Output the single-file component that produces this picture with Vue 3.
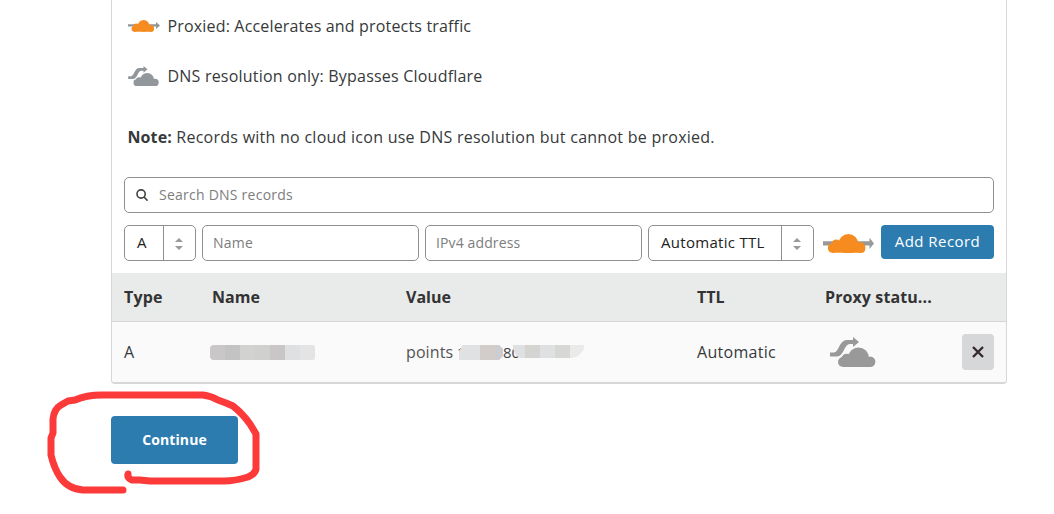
<script setup>
const maskName = ['#c9c7c8', '#c4c3c4', '#d2d2d0', '#d0d0ce', '#c9c6c7', '#dfe0e2', '#e4e4e4']
</script>

<template>
  <main class="page">
    <section class="card">
      <div class="legend">
        <svg class="legend-icon" viewBox="0 0 32 14">
          <path d="M0 5.3H28V3L32 6.4L28 10V7.5H0Z" fill="#92979b" />
          <g fill="#f68b1f"><circle cx="6.4" cy="9.8" r="2.9" /><circle cx="8.2" cy="7.3" r="2.7" /><circle cx="15.6" cy="6.8" r="5.9" /><circle cx="22.7" cy="9.4" r="3.3" /><path d="M6 7H23L25.8 10Q25.7 12.7 24 12.7H6Z" /></g>
        </svg>
        <span class="t1">Proxied: Accelerates and protects traffic</span>
      </div>
      <div class="legend second">
        <svg class="legend-icon grey" viewBox="0 0 46 30">
          <path d="M0 15.5H4C9 15.5 9 3 17 3H23V0L29 5L23 10V7H20C14 7 14 19.5 7 19.5H0Z" fill="#92979b" />
          <g fill="#92979b"><circle cx="13" cy="25" r="5" /><circle cx="16.5" cy="21.5" r="4.8" /><circle cx="28.5" cy="20.8" r="10.4" /><circle cx="40.4" cy="24.6" r="5.4" /><path d="M13 21H40V30H13Z" /></g>
        </svg>
        <span class="t2">DNS resolution only: Bypasses Cloudflare</span>
      </div>
      <p class="note"><b>Note:</b> Records with no cloud icon use DNS resolution but cannot be proxied.</p>

      <div class="search field">
        <svg viewBox="0 0 12 12"><circle cx="5.1" cy="5" r="4.1" /><path d="M8 8L11.5 11.7" /></svg>
        <span class="ph">Search DNS records</span>
      </div>

      <div class="controls">
        <div class="select field type">
          <span>A</span>
          <i><svg viewBox="0 0 8 12"><path d="M0 4L4 0L8 4ZM0 8H8L4 12Z" /></svg></i>
        </div>
        <div class="input field"><span class="ph">Name</span></div>
        <div class="input field"><span class="ph ip">IPv4 address</span></div>
        <div class="select field ttl">
          <span>Automatic TTL</span>
          <i><svg viewBox="0 0 8 12"><path d="M0 4L4 0L8 4ZM0 8H8L4 12Z" /></svg></i>
        </div>
        <svg class="proxy" viewBox="0 0 51 20">
          <path d="M0 8.3H46.5V4.8L51 10.5L46.5 16V12.6H0Z" fill="#999" />
          <g fill="#f68b1f"><circle cx="9.6" cy="15" r="4.8" /><circle cx="13.2" cy="11.2" r="4.7" /><circle cx="25.4" cy="11" r="10" /><circle cx="37" cy="14.4" r="5.4" /><path d="M9 11H37L42.3 15.5Q42 19.8 39 19.8H9Z" /></g>
        </svg>
        <button class="add"><span>Add Record</span></button>
      </div>

      <div class="row head">
        <b class="h-type">Type</b><b>Name</b><b>Value</b><b>TTL</b><b class="h-proxy">Proxy statu...</b>
      </div>
      <div class="row body">
        <span>A</span>
        <div class="mask"><i v-for="(c, n) in maskName" :key="n" :style="{ background: c }"></i></div>
        <div class="value">
          <span class="points">points</span>
          <span class="digits">1</span>
          <svg class="m1" viewBox="0 0 44 15"><path d="M4 0H40L44 4V11L40 15H0V6Z" fill="#e0e1e3" /><path d="M21 0H36V15H21Z" fill="#d2cdca" /><path d="M36 0H40L44 4V11L40 15H36Z" fill="#cbcdd0" /></svg>
          <span class="digits">80</span>
          <svg class="m2" viewBox="0 0 71 13"><path d="M0 0H71V4L65 11L58 13H7Q3 12 0 4Z" fill="#dfe0e1" /><path d="M12 0H27V13H12Z" fill="#d4d4d2" /><path d="M42 0H57V13H42Z" fill="#d7d7d6" /><path d="M57 0H71V4L65 11L58 13H57Z" fill="#e9eaea" /></svg>
        </div>
        <span class="auto">Automatic</span>
        <svg class="bypass" viewBox="0 0 46 30">
          <path d="M0 15.5H4C9 15.5 9 3 17 3H23V0L29 5L23 10V7H20C14 7 14 19.5 7 19.5H0Z" fill="#999" />
          <g fill="#999"><circle cx="13" cy="25" r="5" /><circle cx="16.5" cy="21.5" r="4.8" /><circle cx="28.5" cy="20.8" r="10.4" /><circle cx="40.2" cy="24.8" r="5.2" /><path d="M13 21H40V30H13Z" /></g>
        </svg>
        <button class="remove"><svg viewBox="0 0 12 12"><path d="M1 1L11 11M11 1L1 11" /></svg></button>
      </div>
    </section>

    <button class="continue"><span>Continue</span></button>

    <svg class="scribble" viewBox="0 0 1054 514">
      <path d="M123 490H83Q68 489 60 477Q54 468 51 455V438L53 433V419Q54 409 61 405L68 401L75 400Q86 395 102 395H203Q211 396 218 400L226 403L233 406Q243 414 250 424L256 434V469Q255 474 248 477Q235 481 224 481H150L140 480H132Q127 478 128 474" />
    </svg>
  </main>
</template>

<style>
body { background: #fff; overflow: hidden; }
</style>

<style scoped>
* { box-sizing: border-box; }
.page { position: relative; width: 1054px; height: 514px; overflow: hidden; padding-left: 111px; font: 16px/24px "Open Sans", "Noto Sans", sans-serif; color: #36393a; }
.page span, .page b, .note { white-space: nowrap; }
.card { width: 896px; height: 384px; border: 1px solid #d5d7d8; border-top: 0; border-bottom-width: 2px; border-radius: 0 0 4px 4px; overflow: hidden; padding-top: 14px; }
.legend { display: flex; align-items: center; height: 24px; padding-left: 16px; gap: 7.5px; }
.second { margin-top: 26px; }
.legend-icon { width: 32px; height: 14px; }
.grey { width: 31px; height: 20px; margin-right: 1px; }
.t1 { letter-spacing: .17px; }
.t2 { letter-spacing: .21px; }
.note { margin: 37px 0 0 15.5px; height: 24px; letter-spacing: .26px; }
.note b { letter-spacing: .1px; }
.field { border: 1px solid #8d9093; border-radius: 5px; background: #fff; display: flex; align-items: center; height: 36px; }
.ph { color: #7d7d7d; font-size: 14px; letter-spacing: .24px; }
.ip { letter-spacing: .12px; }
.search { width: 870px; margin: 28px 0 0 12px; padding-left: 11px; gap: 11px; }
.search svg { width: 12px; height: 12px; fill: none; stroke: #444; stroke-width: 1.6; }
.controls { display: flex; margin: 12px 0 0 12px; height: 36px; }
.type { width: 72px; margin-right: 6px; }
.type > span, .ttl > span { flex: 1; padding-left: 12px; font-size: 15px; color: #222; letter-spacing: .3px; position: relative; top: -1px; }
.select i { width: 32px; align-self: stretch; border-left: 1px solid #8d9093; display: grid; place-items: center; }
.select i svg { width: 8px; height: 12px; fill: #999; display: block; margin: 1px 2px 0 0; }
.input { width: 217px; margin-right: 6px; padding-left: 10px; }
.ttl { width: 166px; }
.proxy { width: 51px; height: 20px; margin: 8px 7px 0 9px; }
button { border: 0; padding: 0; font: inherit; color: #fff; background: #2c7cb0; border-radius: 4px; display: grid; place-items: center; }
.add { width: 113px; height: 34px; font-size: 15px; letter-spacing: .45px; padding-bottom: 2px; }
.row { display: grid; grid-template-columns: 88px 194px 291px 128px 137px 32px; padding-left: 12px; align-items: center; }
.head { height: 49px; margin-top: 12px; background: #e9ebea; border-bottom: 1px solid #d5d7d8; color: #333; }
.h-type { letter-spacing: .2px; }
.h-proxy { letter-spacing: .1px; }
.body { height: 60px; background: #fafafa; }
.mask { display: flex; width: 105px; height: 15px; margin-left: -2px; border-radius: 4px 2px 2px 4px; overflow: hidden; }
.mask i { width: 15px; }
.value { display: flex; align-items: center; height: 24px; color: #555; }
.points { width: 51px; letter-spacing: .1px; }
.auto { letter-spacing: .3px; }
.digits { color: #444; width: 7px; font-size: 15px; }
.m1 { width: 44px; height: 15px; margin-left: -5px; position: relative; }
.m1 + .digits { width: 15px; }
.m2 { width: 71px; height: 13px; margin: -2px 0 0 -5px; position: relative; }
.bypass { width: 46px; height: 30px; margin-left: 5px; }
.remove { width: 32px; height: 36px; background: #d5d7d8; }
.remove svg { width: 12px; height: 12px; stroke: #36292c; stroke-width: 2.4; fill: none; }
.continue { width: 127px; height: 48px; margin-top: 32px; font-size: 14px; font-weight: 700; letter-spacing: .1px; }
.scribble { position: absolute; left: 0; top: 0; width: 1054px; height: 514px; fill: none; stroke: #fc3a3a; stroke-width: 7; stroke-linecap: round; stroke-linejoin: round; pointer-events: none; }
</style>
